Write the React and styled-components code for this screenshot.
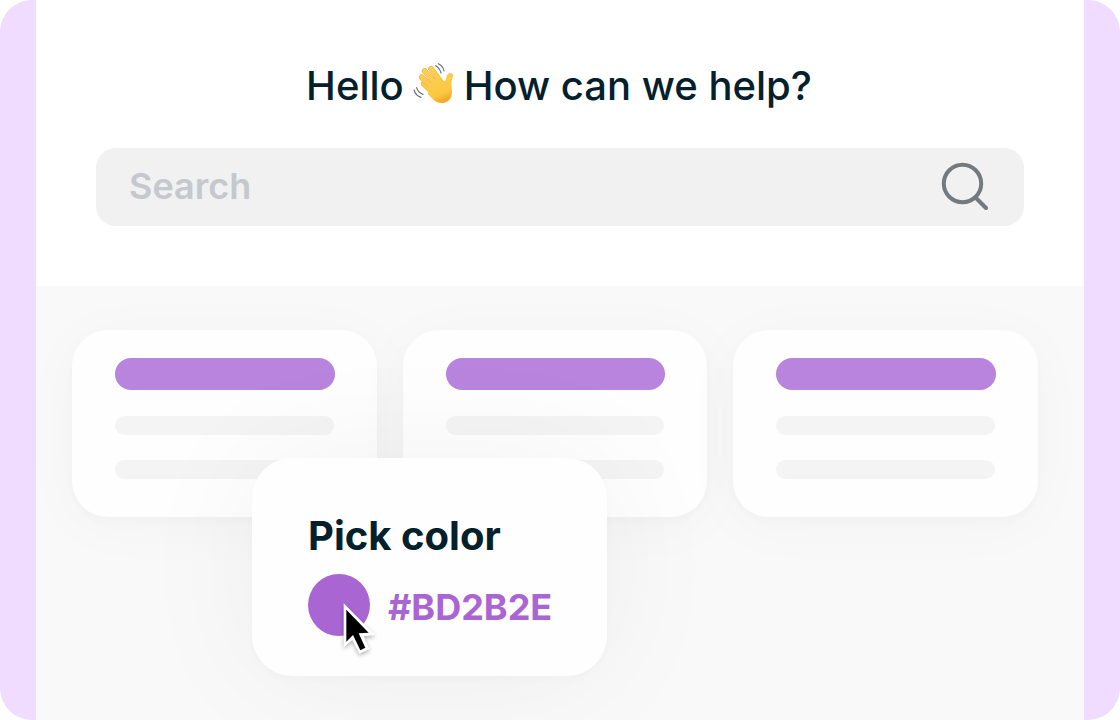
import React from "react";
import styled, { createGlobalStyle } from "styled-components";

const GlobalStyle = createGlobalStyle`
  *, *::before, *::after { box-sizing: border-box; }
  body {
    margin: 0;
    background: #ffffff;
    color: #04202c;
    font-family: Inter, "Liberation Sans", sans-serif;
  }
`;

const Frame = styled.div`
  display: flex;
  min-height: 100vh;
  padding: 0 36px;
  border-radius: 32px;
  background: #f0dcfe;
`;

const Page = styled.main`
  display: flex;
  flex: 1;
  flex-direction: column;
  min-width: 0;
  overflow: hidden;
  background: #f9f9f9;
`;

const Hero = styled.header`
  display: flex;
  flex-direction: column;
  align-items: center;
  gap: 37px;
  padding: 61px 60px 60px;
  background: #ffffff;
`;

const Title = styled.h1`
  display: flex;
  align-items: center;
  gap: 8px;
  margin: 0 2px 0 0;
  font-size: 40px;
  font-weight: 500;
  line-height: 50px;
  white-space: nowrap;
`;

const Wave = styled.svg`
  width: 44px;
  height: 44px;
  margin-bottom: 4px;
`;

const SearchBox = styled.form`
  display: flex;
  align-items: center;
  width: 100%;
  height: 78px;
  padding: 0 36px 2px 33px;
  border-radius: 20px;
  background: #f1f1f1;
`;

const SearchInput = styled.input`
  flex: 1;
  min-width: 0;
  padding: 0;
  border: 0;
  outline: 0;
  background: transparent;
  color: #04202c;
  font: 600 36px/44px Inter, "Liberation Sans", sans-serif;
  &::placeholder { color: #c5c8cc; opacity: 1; }
`;

const SearchButton = styled.button`
  display: flex;
  padding: 0;
  border: 0;
  background: transparent;
  color: #737a7f;
  cursor: pointer;
`;

const Content = styled.section`
  position: relative;
  flex: 1;
  padding: 44px 46px 44px 36px;
`;

const CardGrid = styled.div`
  display: grid;
  grid-template-columns: repeat(3, minmax(0, 1fr));
  gap: 26px;
`;

const Card = styled.article`
  height: 187px;
  padding: 28px 42px 0 43px;
  border-radius: 36px;
  background: #fefefe;
  box-shadow: 0 4px 8px rgba(0, 0, 0, 0.02), 0 8px 60px rgba(0, 0, 0, 0.03);
`;

const CardHeading = styled.div`
  height: 32px;
  margin-bottom: 26px;
  border-radius: 16px;
  background: #b884dd;
`;

const CardLine = styled.div`
  height: 19px;
  margin: 0 1px 25px 0;
  border-radius: 10px;
  background: #f4f4f4;
`;

const Picker = styled.aside`
  position: absolute;
  top: 172px;
  left: 216px;
  width: 355px;
  height: 218px;
  padding: 52px 56px 0;
  border-radius: 40px;
  background: #fefefe;
  box-shadow: 0 4px 8px rgba(0, 0, 0, 0.02), 0 0 130px rgba(0, 0, 0, 0.05);
`;

const PickerTitle = styled.h2`
  margin: 0 0 12px;
  font-size: 40px;
  font-weight: 700;
  line-height: 52px;
  white-space: nowrap;
`;

const ColorRow = styled.div`
  display: flex;
  align-items: center;
  gap: 18px;
`;

const Swatch = styled.button`
  position: relative;
  flex: none;
  width: 62px;
  height: 62px;
  padding: 0;
  border: 0;
  border-radius: 50%;
  background: #a966d3;
`;

const Pointer = styled.svg`
  position: absolute;
  top: 28px;
  left: 34px;
  width: 34px;
  height: 54px;
  overflow: visible;
  filter: drop-shadow(0 2px 2px rgba(0, 0, 0, 0.3));
`;

const HexCode = styled.span`
  padding-top: 4px;
  color: #a966d3;
  font-size: 36px;
  font-weight: 700;
  line-height: 44px;
`;

const fingers = [
  "M71 98 L106 132",
  "M65 79 L108 122",
  "M74 60 L114 106",
  "M93 53 L126 98",
];

function WavingHand() {
  return (
    <Wave viewBox="36 33 132 132" role="img" aria-label="Waving hand">
      <defs>
        <linearGradient id="skin" gradientUnits="userSpaceOnUse" x1="80" y1="48" x2="128" y2="158">
          <stop offset="0" stopColor="#fdd05a" />
          <stop offset="0.75" stopColor="#fdc741" />
          <stop offset="1" stopColor="#eda424" />
        </linearGradient>
      </defs>
      {fingers.map((d) => (
        <g key={d} fill="none" strokeLinecap="round">
          <path d={d} stroke="#e9ac3c" strokeWidth="17" />
          <path d={d} stroke="url(#skin)" strokeWidth="14" />
        </g>
      ))}
      <path
        d="M100 84 L125 91 C135 93 138 87 139 80 C140 72 144 65 151 65 C158 66 161 71 158 79 C155 88 153 97 155 109 C158 128 155 142 145 149 C131 159 114 158 101 147 L84 130 L86 104 Z"
        fill="url(#skin)"
      />
      <path
        d="M107 44 Q119 50 123 66 M115 38 Q129 44 132 60 M50 110 Q54 125 69 130 M42 117 Q47 134 63 139"
        fill="none"
        stroke="#6b7075"
        strokeWidth="3.5"
        strokeLinecap="round"
      />
    </Wave>
  );
}

function SearchIcon() {
  return (
    <svg width="48" height="48" viewBox="0 0 48 48" fill="none" stroke="currentColor" strokeWidth="4" strokeLinecap="round" aria-hidden="true">
      <circle cx="22.5" cy="21.5" r="18.7" />
      <path d="M36 36 L46 46" />
    </svg>
  );
}

export default function App() {
  return (
    <>
      <GlobalStyle />
      <Frame>
        <Page>
          <Hero>
            <Title>
              <span>Hello</span>
              <WavingHand />
              <span>How can we help?</span>
            </Title>
            <SearchBox role="search" onSubmit={(e) => e.preventDefault()}>
              <SearchInput type="text" placeholder="Search" aria-label="Search" />
              <SearchButton type="submit" aria-label="Submit search">
                <SearchIcon />
              </SearchButton>
            </SearchBox>
          </Hero>
          <Content>
            <CardGrid>
              {[1, 2, 3].map((id) => (
                <Card key={id}>
                  <CardHeading />
                  <CardLine />
                  <CardLine />
                </Card>
              ))}
            </CardGrid>
            <Picker>
              <PickerTitle>Pick color</PickerTitle>
              <ColorRow>
                <Swatch type="button" aria-label="Choose purple">
                  <Pointer viewBox="156 306 102 162" aria-hidden="true">
                    <path d="M161 310 V442 L187 420 L208 461 L238 447 L221 409 L255 405 Z" fill="#ffffff" />
                    <path d="M169 329 V425 L189 405 L211 451 L226 443 L206 400 L236 398 Z" fill="#000000" />
                  </Pointer>
                </Swatch>
                <HexCode>#BD2B2E</HexCode>
              </ColorRow>
            </Picker>
          </Content>
        </Page>
      </Frame>
    </>
  );
}
